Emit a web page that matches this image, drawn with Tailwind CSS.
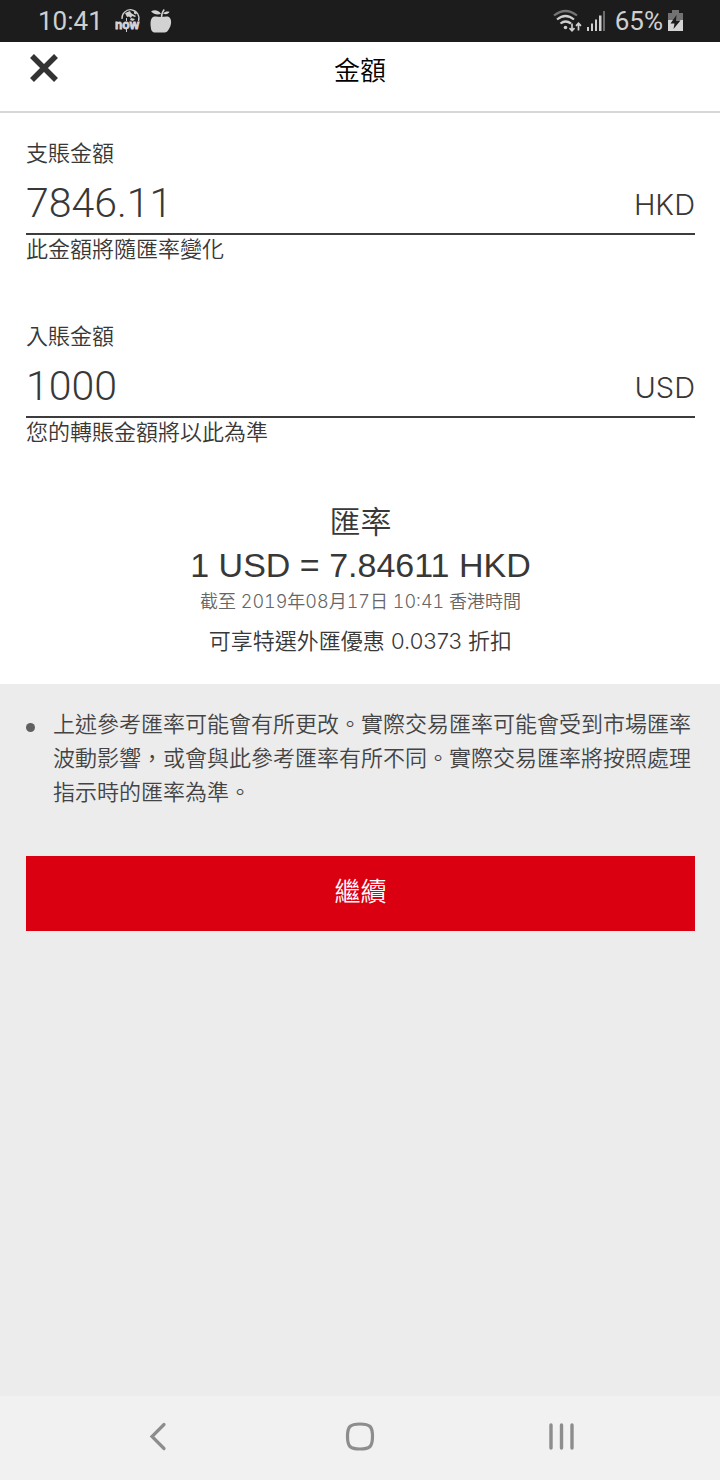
<!DOCTYPE html>
<html lang="zh-Hant-HK">
<head>
<meta charset="utf-8">
<meta name="viewport" content="width=device-width, initial-scale=1">
<title>金額</title>
<script src="https://cdn.jsdelivr.net/npm/@tailwindcss/browser@4"></script>
</head>
<body class="flex min-h-screen flex-col bg-[#ececec] font-['Inter','Noto_Sans_CJK_TC',sans-serif] font-[350] text-[#383838]">

<!-- Device status bar -->
<div class="flex h-[42px] items-center justify-between bg-[#1c1c1c] pr-[37px] pl-[38px] font-['Roboto',sans-serif] text-[26px] leading-[42px] font-normal text-[#cfcfcf]">
  <div class="flex items-center">
    <span>10:41</span>
    <svg class="ml-3 h-[26px] w-[26px]" viewBox="0 0 26 26" aria-hidden="true">
      <path d="M7 11A8.500 8.500 0 1 1 23.500 13" fill="none" stroke="#cfcfcf" stroke-width="1.300"/>
      <path d="M10 5l5-2 1 2 1.500 1L21 8l-1 1-3-1-1 2-2-1.500-2 .5zM19 3l3 2-1 1.500-2-1zM16 10l4 1-2 2-3-1z" fill="#cfcfcf"/>
      <path d="M11.500 13v-3M11.500 20v4" stroke="#cfcfcf" stroke-width="1"/>
      <text x="0" y="20.500" font-family="Liberation Sans, sans-serif" font-weight="700" font-size="12" fill="#d6d6d6" stroke="#d6d6d6" stroke-width=".8">now</text>
    </svg>
    <svg class="ml-2 h-[26px] w-[24px]" viewBox="0 0 24 26" aria-hidden="true">
      <path d="M4 9c3-1 5 0 8 0 3 0 5.500-1 8 0 3 2 2.500 8 .5 11-1.500 3-3 4.500-5 4.500H6c-3 0-4-2.500-4.200-5.500C1.300 15 1.500 10.500 4 9z" fill="#d2d2d2"/>
      <path d="M2 3.500c3-2 8-1.500 10 2.500-4 .8-7 .5-10-2.500zM14 5.500c2-2 4-2.200 6.500-1.700-1 2.200-3.500 3-6.500 1.700z" fill="#d2d2d2"/>
      <path d="M12.500 9.500c0-3.500.8-6 2.800-8" fill="none" stroke="#d2d2d2" stroke-width="1.500"/>
    </svg>
  </div>
  <div class="flex items-center">
    <svg class="h-[24px] w-[30px]" viewBox="0 0 30 24" fill="none" aria-hidden="true">
      <path d="M1 6.500Q12.500-2.500 24 6.500" stroke="#747474" stroke-width="2.200"/>
      <path d="M4 10.500Q12.500 3.500 21 10.500M7.500 14.500Q12.500 10.500 18 14.500" stroke="#cfcfcf" stroke-width="2.200"/>
      <circle cx="12.500" cy="18.500" r="1.800" fill="#cfcfcf"/>
      <path d="M19 14.500v7M16.500 19.200l2.500 2.500 2.500-2.500M25.500 21.500v-7M23 16.800l2.500-2.500 2.500 2.500" stroke="#cfcfcf" stroke-width="1.700"/>
    </svg>
    <svg class="ml-1 h-[22px] w-[20px]" viewBox="0 0 20 22" aria-hidden="true">
      <path d="M0 17h2v4H0zM4 13.500h2V21H4zM8 9.500h2V21H8zM12 5.500h2.500V21H12z" fill="#cfcfcf"/>
      <path d="M16 1h2v20h-2z" fill="#6c6c6c"/>
    </svg>
    <span class="ml-2">65%</span>
    <svg class="ml-[5px] h-[22px] w-[15px]" viewBox="0 0 15 22" aria-hidden="true">
      <path d="M4 0h7v3h4v8H0V3h4z" fill="#727272"/>
      <path d="M0 10h15v11H0z" fill="#d4d4d4"/>
      <path d="M8.500 5L2.500 13.500h4L5.500 19l7-8.500H8z" fill="#1c1c1c"/>
    </svg>
  </div>
</div>

<!-- Page header -->
<header class="grid h-[71px] grid-cols-[64px_1fr_64px] items-start border-b-2 border-[#d7d7d7] bg-white pt-2">
  <button type="button" aria-label="關閉" class="flex h-9 items-center pl-7">
    <svg class="h-8 w-8" viewBox="0 0 32 32" aria-hidden="true">
      <path d="M4 4l24 24M28 4L4 28" stroke="#333" stroke-width="5.500"/>
    </svg>
  </button>
  <h1 class="text-center text-[26px] leading-[42px] text-black">金額</h1>
</header>

<main>
  <form id="amounts" class="bg-white pt-6 pr-[25px] pb-[26px] pl-[26px]">
    <div>
      <label for="debit" class="block text-[22px] leading-8">支賬金額</label>
      <div class="flex h-[66px] items-center border-b-2 border-[#3c3c3c] pt-1">
        <input id="debit" type="text" inputmode="decimal" value="7846.11" aria-describedby="debit-note" class="min-w-0 flex-1 font-['Roboto',sans-serif] text-[41px] leading-[60px] font-light outline-none">
        <span class="pt-1 text-[29px] leading-[60px]">HKD</span>
      </div>
      <p id="debit-note" class="text-[22px] leading-7">此金額將隨匯率變化</p>
    </div>
    <div class="mt-[57px]">
      <label for="credit" class="block text-[22px] leading-8">入賬金額</label>
      <div class="flex h-[66px] items-center border-b-2 border-[#3c3c3c] pt-1">
        <input id="credit" type="text" inputmode="decimal" value="1000" aria-describedby="credit-note" class="min-w-0 flex-1 font-['Roboto',sans-serif] text-[41px] leading-[60px] font-light outline-none">
        <span class="pt-1 text-[29px] leading-[60px]">USD</span>
      </div>
      <p id="credit-note" class="text-[22px] leading-7">您的轉賬金額將以此為準</p>
    </div>
    <section class="mt-14 text-center">
      <h2 class="text-[31px] leading-10">匯率</h2>
      <p class="font-['Liberation_Sans',sans-serif] text-[34px] leading-[46px] font-normal">1 USD = 7.84611 HKD</p>
      <p class="text-[18px] leading-7 text-[#666] tabular-nums">截至 2019年08月17日 10:41 香港時間</p>
      <p class="mt-2 text-[22px] leading-[34px]">可享特選外匯優惠 0.0373 折扣</p>
    </section>
  </form>

  <section class="pt-[23px] pr-[25px] pl-[26px]">
    <ul>
      <li class="flex gap-[18px] text-[22px] leading-[34px] text-[#444]">
        <span class="mt-4 h-[9px] w-[9px] shrink-0 rounded-full bg-[#606060]"></span>
        <span>上述參考匯率可能會有所更改。實際交易匯率可能會受到市場匯率波動影響，或會與此參考匯率有所不同。實際交易匯率將按照處理指示時的匯率為準。</span>
      </li>
    </ul>
    <button type="submit" form="amounts" class="mt-[47px] h-[75px] w-full bg-[#db0011] pb-1 text-[26px] text-white">繼續</button>
  </section>
</main>

<!-- Device navigation bar -->
<nav class="mt-auto flex h-[84px] items-center justify-between bg-[#f1f1f1] pr-[139px] pb-1 pl-[138px]">
  <button type="button" aria-label="返回" class="w-10"><svg class="mx-auto h-8 w-8" viewBox="0 0 32 32" fill="none" stroke="#8d8d8d" stroke-width="3.200" stroke-linecap="round" aria-hidden="true"><path d="M22 4.500L10 16.500l12 12"/></svg></button>
  <button type="button" aria-label="主頁" class="w-10"><svg class="mx-auto h-8 w-8" viewBox="0 0 32 32" fill="none" stroke="#8d8d8d" stroke-width="3.200" aria-hidden="true"><path d="M16 4c10 0 12.500 2.500 12.500 12.500S26 29 16 29 3.500 26.500 3.500 16.500 6 4 16 4z"/></svg></button>
  <button type="button" aria-label="最近使用的應用程式" class="w-10"><svg class="mx-auto h-8 w-8" viewBox="0 0 32 32" fill="none" stroke="#8d8d8d" stroke-width="3.400" stroke-linecap="round" aria-hidden="true"><path d="M6 5v23M16.500 5v23M27 5v23"/></svg></button>
</nav>
</body>
</html>
